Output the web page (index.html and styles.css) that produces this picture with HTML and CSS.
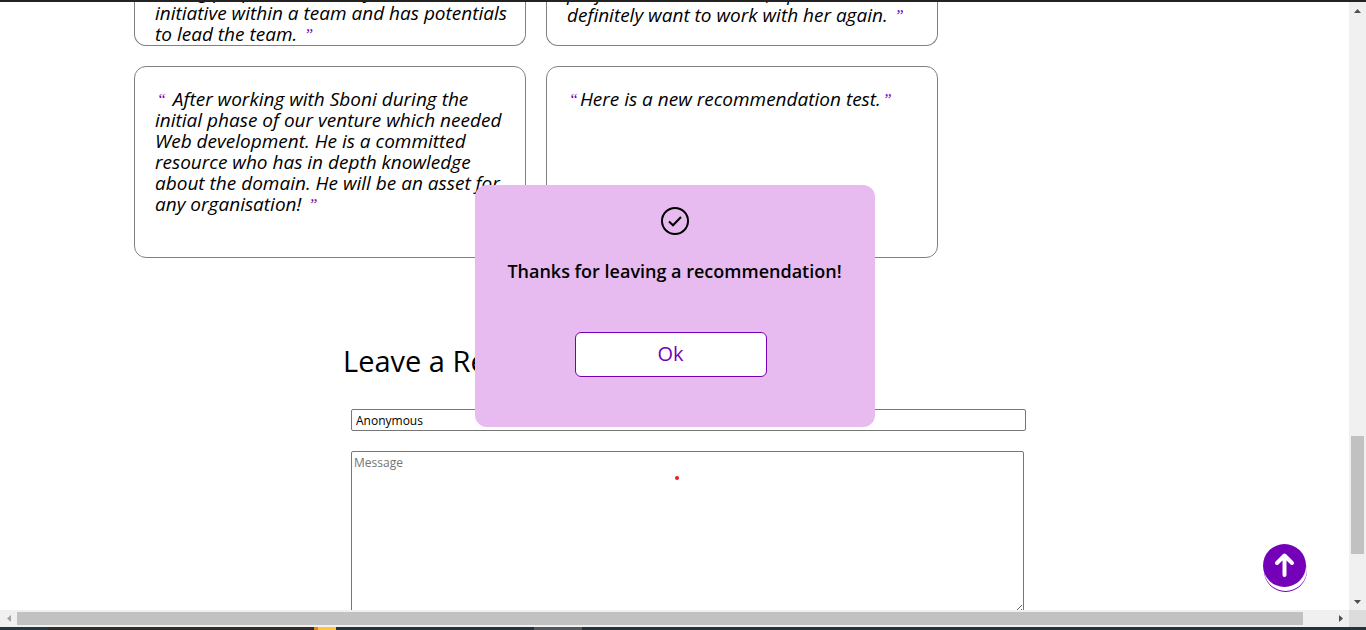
FILE: index.html
```html
<!DOCTYPE html>
<html lang="en">
<head>
<meta charset="utf-8">
<title>Recommendations</title>
<link rel="stylesheet" href="styles.css">
</head>
<body>
<div class="window-edge"></div>
<div class="browser">
  <main class="page">
    <section class="cards">
      <blockquote class="card card-end card-flush"><p>strong purpose and always takes<br>initiative within a team and has potentials<br>to lead the team. <span class="quote">”</span></p></blockquote>
      <blockquote class="card card-end"><p>projects with us on time, up to date<br>definitely want to work with her again. <span class="quote">”</span></p></blockquote>
      <blockquote class="card"><p><span class="quote">“</span> After working with Sboni during the<br>initial phase of our venture which needed<br>Web development. He is a committed<br>resource who has in depth knowledge<br>about the domain. He will be an asset for<br>any organisation! <span class="quote">”</span></p></blockquote>
      <blockquote class="card"><p><span class="quote">“</span>Here is a new recommendation test.<span class="quote">”</span></p></blockquote>
    </section>
    <section class="leave">
      <h2 class="leave-title">Leave a Recommendation</h2>
      <form class="form">
        <input class="field" type="text" value="Anonymous" aria-label="Name">
        <textarea class="message" placeholder="Message" aria-label="Message"></textarea>
      </form>
    </section>
    <div class="overlay">
      <div class="popup" role="dialog" aria-labelledby="popup-text">
        <svg class="check" viewBox="0 0 28 28" fill="none" stroke="#000" stroke-width="2"><circle cx="14" cy="14" r="13"/><path d="M8 14.5l4 3.8 8-8.3"/></svg>
        <h3 class="popup-text" id="popup-text">Thanks for leaving a recommendation!</h3>
        <button class="ok" type="button">Ok</button>
      </div>
    </div>
    <span class="dot"></span>
    <a class="to-top" href="#" aria-label="Back to top"><svg viewBox="0 0 43 43" fill="none" stroke="#fff" stroke-width="4" stroke-linecap="round" stroke-linejoin="round"><path d="M21.5 31V12M14 19l7.500-7.500L29 19"/></svg></a>
  </main>
  <div class="bar bar-v">
    <button class="arrow" type="button" aria-label="Scroll up"><svg viewBox="0 0 7 4"><path d="M0 4L3.500 0 7 4z"/></svg></button>
    <div class="track-v"><div class="thumb-v"></div></div>
    <button class="arrow" type="button" aria-label="Scroll down"><svg viewBox="0 0 7 4"><path d="M0 0h7L3.500 4z"/></svg></button>
  </div>
  <div class="bar bar-h">
    <button class="arrow arrow-off" type="button" aria-label="Scroll left"><svg class="side" viewBox="0 0 4 7"><path d="M4 0v7L0 3.500z"/></svg></button>
    <div class="track-h"><div class="thumb-h"></div></div>
    <button class="arrow" type="button" aria-label="Scroll right"><svg class="side" viewBox="0 0 4 7"><path d="M0 0l4 3.500L0 7z"/></svg></button>
  </div>
  <div class="corner"></div>
</div>
<div class="taskbar"></div>
</body>
</html>
```
FILE: styles.css
```css
* { box-sizing: border-box; }
body {
  margin: 0;
  height: 100vh;
  display: flex;
  flex-direction: column;
  overflow: hidden;
  font-family: "Open Sans", "Noto Sans", sans-serif;
  color: #000;
  background: #fff;
}
.window-edge { height: 2px; flex: none; background: #252222; }
.browser {
  flex: 1;
  min-height: 0;
  display: grid;
  grid-template-columns: minmax(0, 1fr) 17px;
  grid-template-rows: minmax(0, 1fr) 17px;
}
.page { position: relative; overflow: hidden; }
.cards {
  display: grid;
  grid-template-columns: 392px 392px;
  grid-template-rows: 44px 192px;
  gap: 20px;
  padding-left: 134px;
}
.card {
  margin: 0;
  padding: 22px 0 0 20px;
  border: 1px solid #808080;
  border-radius: 12px;
  font-size: 19px;
  line-height: 21px;
  font-style: italic;
  white-space: nowrap;
}
.card p { margin: 0; }
.card-end {
  display: flex;
  align-items: flex-end;
  padding: 0 0 19px 20px;
  border-top: 0;
  border-radius: 0 0 12px 12px;
  overflow: hidden;
}
.card-flush { padding-bottom: 0; }
.quote {
  padding: 0 2px;
  font-family: "Liberation Serif", serif;
  font-size: 16px;
  line-height: 0;
  vertical-align: 1px;
  color: #7400b8;
}
.leave { padding: 82px 0 0 343px; }
.leave-title { margin: 0; font-size: 29px; line-height: 42px; font-weight: 400; }
.form {
  display: flex;
  flex-direction: column;
  gap: 20px;
  padding: 27px 323px 0 8px;
}
.field, .message {
  border: 1px solid #767676;
  border-radius: 2px;
  font: 12px/16px "Open Sans", "Noto Sans", sans-serif;
  background: #fff;
}
.field { height: 22px; padding: 1px 4px; }
.message { height: 163px; margin-right: 2px; padding: 3px 2px; resize: vertical; }
.message::placeholder { color: #757575; }
.overlay {
  position: absolute;
  inset: 0;
  display: flex;
  align-items: center;
  justify-content: center;
}
.popup {
  width: 400px;
  padding: 22px 0 50px;
  display: flex;
  flex-direction: column;
  align-items: center;
  border-radius: 12px;
  background: #e7bbef;
}
.check { width: 28px; height: 28px; }
.popup-text { margin: 24px 0 49px; font-size: 18px; line-height: 24px; font-weight: 600; }
.ok {
  width: 192px;
  height: 45px;
  margin-right: 8px;
  padding: 0 0 2px;
  border: 1px solid #7400b8;
  border-radius: 6px;
  font: 20px/24px "Open Sans", "Noto Sans", sans-serif;
  color: #7400b8;
  background: #fff;
}
.dot {
  position: absolute;
  left: 50%;
  top: 474px;
  width: 4px;
  height: 4px;
  border-radius: 50%;
  background: #ed1c24;
}
.to-top {
  position: absolute;
  right: 43px;
  bottom: 23px;
  width: 43px;
  height: 43px;
  border-radius: 50%;
  background: #7400b8;
  box-shadow: 1px 4px 0 #fff, 1px 5px 0 #7400b8;
}
.to-top svg { display: block; }
.bar { display: flex; background: #f0f0f0; }
.bar-v { flex-direction: column; }
.arrow {
  flex: none;
  width: 17px;
  height: 17px;
  padding: 0;
  border: 0;
  display: flex;
  align-items: center;
  justify-content: center;
  color: #505050;
  background: none;
}
.arrow-off { color: #a3a3a3; }
.arrow svg { width: 7px; height: 4px; fill: currentColor; }
.arrow .side { width: 4px; height: 7px; }
.track-v { flex: 1; display: flex; flex-direction: column; padding: 0 2px 39px; }
.thumb-v { height: 118px; margin-top: auto; background: #c1c1c1; }
.track-h { flex: 1; padding: 2px 29px 2px 0; }
.thumb-h { height: 13px; background: #c1c1c1; }
.corner { background: #dcdcdc; }
.taskbar {
  flex: none;
  height: 3px;
  background: linear-gradient(90deg, #243641 48px, #302c2c 48px 314px, #ef7d1a 314px 318px, #fcc934 318px 336px, #24343b 336px 534px, #50585e 534px 582px, #24343b 582px);
}
```
